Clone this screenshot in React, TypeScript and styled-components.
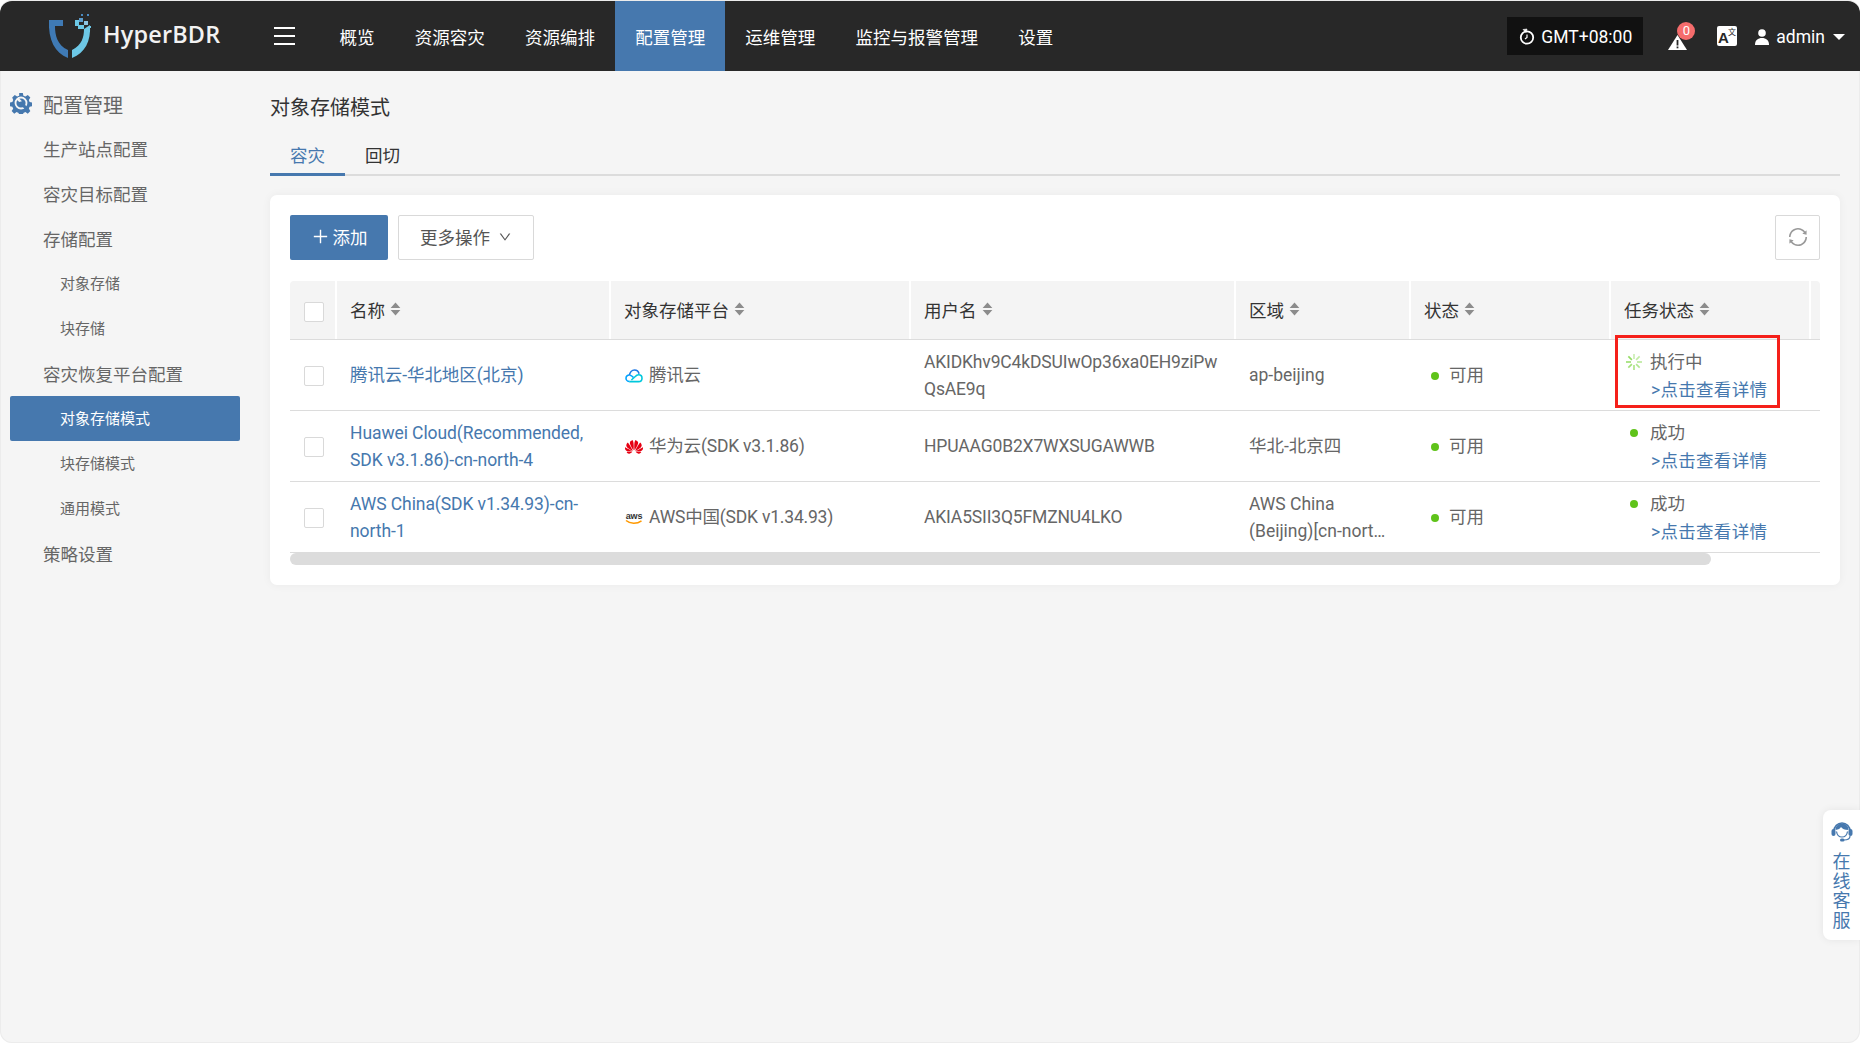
import React from "react";
import styled, { createGlobalStyle } from "styled-components";
import { AiOutlineDown, AiOutlinePlus, AiOutlineSync } from "react-icons/ai";
import { SiHuawei } from "react-icons/si";

const COLUMNS = "45px 274px 300px 325px 175px 200px 200px 11px";
const BLUE = "#4678ae";

const GlobalStyle = createGlobalStyle`
  html, body {
    margin: 0;
    padding: 0;
    background: #fff;
  }
  body {
    font-family: Roboto, "Noto Sans CJK SC", sans-serif;
    font-size: 17.5px;
    color: #666;
    overflow: hidden;
  }
  * {
    box-sizing: border-box;
  }
`;

const Page = styled.div`
  width: 1860px;
  height: 1043px;
  padding-top: 1px;
  background: #f5f5f5;
  border-radius: 12px;
  overflow: hidden;
  box-shadow: inset 0 0 0 1px #ececec;
  display: flex;
  flex-direction: column;
  position: relative;
`;

const TopBar = styled.header`
  height: 70px;
  flex: none;
  background: #282828;
  border-radius: 12px 12px 0 0;
  display: flex;
  align-items: stretch;
  color: #fff;
`;

const Brand = styled.div`
  width: 274px;
  padding-left: 48px;
  display: flex;
  align-items: center;
  gap: 11px;
`;

const BrandName = styled.span`
  font-family: "Open Sans", sans-serif;
  font-size: 23.4px;
  font-weight: 600;
  letter-spacing: 0.2px;
  color: #f2f2f2;
  margin-top: -5px;
`;

const Burger = styled.button`
  width: 45.5px;
  padding: 0 25px 0 0;
  background: none;
  border: 0;
  display: flex;
  flex-direction: column;
  justify-content: center;
  gap: 6px;
  span {
    display: block;
    height: 2px;
    background: #fff;
  }
`;

const NavItem = styled.a<{ $active?: boolean }>`
  padding: 0 20.1px;
  display: flex;
  align-items: center;
  color: #fff;
  background: ${(p) => (p.$active ? BLUE : "transparent")};
  white-space: nowrap;
`;

const TopRight = styled.div`
  margin-left: auto;
  padding-right: 15px;
  display: flex;
  align-items: center;
`;

const TimeZone = styled.div`
  width: 136px;
  height: 38px;
  margin-top: -1px;
  padding: 2px 0 0 12px;
  background: #111;
  display: flex;
  align-items: center;
  gap: 6px;
  font-size: 17.5px;
`;

const AlertIcon = styled.div`
  position: relative;
  width: 20px;
  height: 16px;
  margin: 12px 0 0 25px;
`;

const Badge = styled.span`
  position: absolute;
  left: 9px;
  top: -12px;
  width: 18px;
  height: 18px;
  border-radius: 50%;
  background: #f56c6c;
  color: #fff;
  font-size: 13px;
  line-height: 18px;
  text-align: center;
`;

const TranslateIcon = styled.svg`
  margin: 0 0 0 29px;
`;

const UserName = styled.div`
  margin: 2px 0 0 18px;
  display: flex;
  align-items: center;
  gap: 7px;
`;

const Caret = styled.span`
  width: 0;
  height: 0;
  margin: 0 0 0 1px;
  border-left: 6px solid transparent;
  border-right: 6px solid transparent;
  border-top: 6px solid #fff;
`;

const Body = styled.div`
  flex: 1;
  display: flex;
`;

const Sidebar = styled.aside`
  width: 270px;
  flex: none;
  padding: 11px 30px 0 10px;
`;

const SideHead = styled.div`
  height: 44px;
  display: flex;
  align-items: center;
  gap: 11px;
  font-size: 20px;
  color: #666;
  svg {
    margin-top: -3px;
  }
`;

const SideItem = styled.div<{ $sub?: boolean; $active?: boolean }>`
  height: 45px;
  display: flex;
  align-items: center;
  padding: 0 0 ${(p) => (p.$sub ? "2px" : "0")} ${(p) => (p.$sub ? "50px" : "33px")};
  font-size: ${(p) => (p.$sub ? "15px" : "17.5px")};
  color: ${(p) => (p.$active ? "#fff" : "#666")};
  background: ${(p) => (p.$active ? BLUE : "transparent")};
  border-radius: 2px;
`;

const Main = styled.main`
  flex: 1;
  min-width: 0;
  padding: 19px 20px 0 0;
`;

const Title = styled.h1`
  margin: 0;
  height: 36px;
  font-size: 20px;
  line-height: 36px;
  font-weight: 400;
  color: #333;
`;

const Tabs = styled.div`
  margin-top: 9px;
  height: 41px;
  display: flex;
  border-bottom: 2px solid #dcdcdc;
`;

const Tab = styled.div<{ $active?: boolean }>`
  width: 75px;
  height: 41px;
  text-align: center;
  line-height: 42px;
  color: ${(p) => (p.$active ? BLUE : "#333")};
  border-bottom: 3px solid ${(p) => (p.$active ? BLUE : "transparent")};
`;

const Card = styled.section`
  margin-top: 19px;
  height: 390px;
  padding: 20px 20px 0;
  background: #fff;
  border-radius: 7px;
  box-shadow: 0 0 10px rgba(0, 0, 0, 0.05);
`;

const Toolbar = styled.div`
  display: flex;
  gap: 10px;
  height: 45px;
`;

const PrimaryButton = styled.button`
  width: 98px;
  padding: 0 0 2px;
  border: 0;
  border-radius: 2px;
  background: ${BLUE};
  color: #fff;
  font: inherit;
  display: flex;
  align-items: center;
  justify-content: center;
  gap: 3px;
`;

const GhostButton = styled.button`
  width: 136px;
  padding: 0 0 2px;
  border: 1px solid #d9d9d9;
  border-radius: 2px;
  background: #fff;
  color: #555;
  font: inherit;
  display: flex;
  align-items: center;
  justify-content: center;
  gap: 8px;
`;

const RefreshButton = styled(GhostButton)`
  width: 45px;
  margin-left: auto;
  color: #999;
`;

const Table = styled.div`
  margin-top: 21px;
`;

const HeadRow = styled.div`
  height: 59px;
  display: grid;
  grid-template-columns: ${COLUMNS};
  background: #f4f4f4;
  border-radius: 4px 4px 0 0;
  border-bottom: 1px solid #dcdcdc;
  color: #333;
`;

const HeadCell = styled.div`
  display: flex;
  align-items: center;
  gap: 5px;
  padding: 0 0 2px 13px;
  border-left: 2px solid #fff;
`;

const CheckCell = styled.div`
  display: flex;
  align-items: center;
  justify-content: center;
  padding-left: 3px;
`;

const HeadCheckCell = styled(CheckCell)`
  padding-top: 3px;
`;

const CheckBox = styled.span`
  width: 20px;
  height: 20px;
  background: #fff;
  border: 1px solid #d9d9d9;
  border-radius: 2px;
`;

const Row = styled.div`
  height: 71px;
  padding-top: 2px;
  display: grid;
  grid-template-columns: ${COLUMNS};
  border-bottom: 1px solid #dcdcdc;
  position: relative;
`;

const Cell = styled.div`
  display: flex;
  align-items: center;
  padding: 0 15px;
  line-height: 27.5px;
  min-width: 0;
`;

const LinkText = styled.a`
  color: ${BLUE};
  letter-spacing: -0.08px;
`;

const Platform = styled(Cell)`
  gap: 6px;
  padding-left: 16px;
  white-space: nowrap;
  letter-spacing: -0.2px;
`;

const Username = styled.div`
  word-break: break-all;
  letter-spacing: -0.15px;
`;

const Clamp = styled.div`
  display: -webkit-box;
  -webkit-box-orient: vertical;
  -webkit-line-clamp: 2;
  overflow: hidden;
`;

const Dot = styled.span`
  flex: none;
  width: 8px;
  height: 8px;
  border-radius: 50%;
  background: #5fc31a;
`;

const StatusCell = styled(Cell)`
  gap: 10px;
  padding-left: 22px;
`;

const TaskCell = styled.div`
  padding: 6px 0 0 16px;
  line-height: 28px;
`;

const TaskLine = styled.div`
  display: flex;
  align-items: center;
`;

const TaskMark = styled.span`
  width: 25px;
  display: flex;
  align-items: center;
  justify-content: center;
  padding-right: 7px;
`;

const DetailLink = styled.a`
  display: block;
  padding-left: 26px;
  color: ${BLUE};
  letter-spacing: 0.3px;
`;

const Highlight = styled.div`
  position: absolute;
  left: 1325px;
  top: -5px;
  width: 165px;
  height: 73px;
  border: 3px solid #f5201a;
  pointer-events: none;
`;

const ScrollBar = styled.div`
  width: 1421px;
  height: 12px;
  background: #dcdcdc;
  border-radius: 6px;
`;

const Service = styled.div`
  position: absolute;
  right: 0;
  top: 810px;
  width: 37px;
  height: 130px;
  padding: 9px 0 0 0;
  background: #fff;
  border-radius: 8px 0 0 8px;
  box-shadow: 0 0 8px rgba(0, 0, 0, 0.07);
  color: ${BLUE};
  font-size: 18px;
  line-height: 19.5px;
  text-align: center;
  svg {
    display: block;
    margin: 0 auto 9px;
  }
`;

const Sort = () => (
  <svg width="11" height="14" viewBox="0 0 10 13">
    <path d="M5 0.5 9.5 5.5H0.5Z M5 12.5 0.5 7.5H9.5Z" fill="#8c8c8c" />
  </svg>
);

const Logo = () => (
  <svg width="44" height="44" viewBox="0 0 44 44">
    <path d="M1 6H15V12H7C7 21 9 31 20 36V44C7 39 0 26 1 6Z" fill="#3f7ab5" />
    <path d="M24 44V36C34 31 36 23 36 15L42 11C43 27 37 39 24 44Z" fill="#6dc8e6" />
    <path d="M27 6H31V11H36V15H30V12H27Z" fill="#6dc8e6" />
    <rect x="31" y="4" width="4" height="4" fill="#5b9ccc" />
    <rect x="36" y="7" width="4" height="4" fill="#8cc4e2" />
    <rect x="33" y="0" width="2" height="2" fill="#4b8bc0" />
    <rect x="39" y="0" width="2" height="2" fill="#4b8bc0" />
    <rect x="41" y="12" width="2" height="2" fill="#6dc8e6" />
  </svg>
);

const ClockIcon = () => (
  <svg width="16" height="17" viewBox="0 0 16 17" fill="none" stroke="#fff">
    <circle cx="8" cy="9.5" r="6.2" strokeWidth="1.8" />
    <path d="M8 6.5V9.5L6 11" strokeWidth="1.2" />
    <path d="M4 1.5 8 1 7 4.5Z" fill="#fff" strokeWidth="0.6" />
  </svg>
);

const TriangleIcon = () => (
  <svg width="19" height="15" viewBox="0 0 19 15">
    <path d="M9.5 0 19 15H0Z" fill="#fff" />
    <rect x="8.6" y="5" width="1.8" height="5.5" fill="#282828" />
    <rect x="8.6" y="11.5" width="1.8" height="1.8" fill="#282828" />
  </svg>
);

const GearIcon = () => (
  <svg width="22" height="22" viewBox="0 0 24 24">
    <path
      fill={BLUE}
      d="M10 1h4l.6 3 2.2.9 2.6-1.7 2.8 2.8-1.7 2.6.9 2.2 3 .6v4l-3 .6-.9 2.2 1.7 2.6-2.8 2.8-2.6-1.7-2.2.9-.6 3h-4l-.6-3-2.2-.9-2.6 1.7-2.8-2.8 1.7-2.6-.9-2.2-3-.6v-4l3-.6.9-2.2L2.4 6l2.8-2.8 2.6 1.7 2.2-.9Z"
    />
    <circle cx="12" cy="12" r="6" fill="none" stroke="#f5f5f5" strokeWidth="2" />
    <path d="M11 11l9 9" stroke={BLUE} strokeWidth="3.5" />
    <path d="M9 6l4 4-3 1-3-3Z" fill="#f5f5f5" />
  </svg>
);

const TencentIcon = () => (
  <svg width="18" height="14" viewBox="0 0 18 14" fill="none">
    <path d="M4.5 12.5C2.5 12.5 1 11 1 9.2 1 7.4 2.5 6 4.3 6" stroke="#00a4ff" strokeWidth="1.6" />
    <path d="M4.4 6.5C4.8 3.3 7 1 9.5 1c2.3 0 4 1.5 4.6 3.8" stroke="#1e78e6" strokeWidth="1.6" />
    <path
      d="M4.3 12.6h9.2c2 0 3.5-1.5 3.5-3.4 0-1.9-1.5-3.4-3.4-3.4-1.4 0-2.4.7-3.6 2L6.4 11"
      stroke="#00c8dc"
      strokeWidth="1.6"
    />
    <path d="M4.8 6.2c1 0 1.8.5 2.6 1.3l1 1" stroke="#00a4ff" strokeWidth="1.6" />
  </svg>
);

const AwsIcon = () => (
  <svg width="18" height="14" viewBox="0 0 18 14">
    <text x="9" y="7.5" textAnchor="middle" fontFamily="Liberation Sans, sans-serif" fontSize="9" fontWeight="700" fill="#333">
      aws
    </text>
    <path d="M1 9.5C5 13 12 13 16.5 9.8" fill="none" stroke="#f90" strokeWidth="1.5" />
  </svg>
);

const Spinner = () => (
  <svg width="16" height="16" viewBox="0 0 16 16">
    {[0, 45, 90, 135, 180, 225, 270, 315].map((deg, i) => (
      <rect
        key={deg}
        x="7.2"
        y="0"
        width="1.6"
        height="5"
        fill="#93dc62"
        opacity={0.5 + i * 0.07}
        transform={`rotate(${deg} 8 8)`}
      />
    ))}
  </svg>
);

const HeadsetIcon = () => (
  <svg width="22" height="24" viewBox="0 0 22 24">
    <path d="M3 12a8 8 0 0 1 16 0" fill="none" stroke={BLUE} strokeWidth="1.6" />
    <path d="M4.5 11c0-4 3-6.5 6.5-6.5s6.5 2.5 6.5 6.5c-4 0-6-1-7.5-3-.8 1.5-2.5 2.7-5.5 3Z" fill={BLUE} />
    <path d="M5.5 12.5c.5 3.5 2.8 5.5 5.5 5.5s5-2 5.5-5.5" fill="none" stroke={BLUE} strokeWidth="1.2" />
    <rect x="0.5" y="10" width="4" height="7" rx="2" fill={BLUE} />
    <rect x="17.5" y="10" width="4" height="7" rx="2" fill={BLUE} />
    <path d="M19 17c0 3-3 4-6 4" fill="none" stroke={BLUE} strokeWidth="1.2" />
    <rect x="9" y="19.5" width="4.5" height="3" rx="1.5" fill={BLUE} />
  </svg>
);

const HeadLabel = ({ children }: { children: React.ReactNode }) => (
  <HeadCell>
    {children}
    <Sort />
  </HeadCell>
);

const rows = [
  {
    name: "腾讯云-华北地区(北京)",
    icon: <TencentIcon />,
    platform: "腾讯云",
    user: "AKIDKhv9C4kDSUIwOp36xa0EH9ziPwQsAE9q",
    region: "ap-beijing",
    running: true,
  },
  {
    name: "Huawei Cloud(Recommended, SDK v3.1.86)-cn-north-4",
    icon: <SiHuawei size={18} color="#e60012" />,
    platform: "华为云(SDK v3.1.86)",
    user: "HPUAAG0B2X7WXSUGAWWB",
    region: "华北-北京四",
    running: false,
  },
  {
    name: "AWS China(SDK v1.34.93)-cn-north-1",
    icon: <AwsIcon />,
    platform: "AWS中国(SDK v1.34.93)",
    user: "AKIA5SII3Q5FMZNU4LKO",
    region: "AWS China (Beijing)[cn-north-1]",
    running: false,
  },
];

const navItems = ["概览", "资源容灾", "资源编排", "配置管理", "运维管理", "监控与报警管理", "设置"];

export default function App() {
  return (
    <Page>
      <GlobalStyle />
      <TopBar>
        <Brand>
          <Logo />
          <BrandName>HyperBDR</BrandName>
        </Brand>
        <Burger>
          <span />
          <span />
          <span />
        </Burger>
        {navItems.map((item) => (
          <NavItem key={item} $active={item === "配置管理"}>
            {item}
          </NavItem>
        ))}
        <TopRight>
          <TimeZone>
            <ClockIcon />
            GMT+08:00
          </TimeZone>
          <AlertIcon>
            <TriangleIcon />
            <Badge>0</Badge>
          </AlertIcon>
          <TranslateIcon width="20" height="20" viewBox="0 0 20 20">
            <rect width="20" height="20" rx="2" fill="#fff" />
            <text x="1" y="17" fontFamily="Liberation Sans, sans-serif" fontSize="15" fontWeight="700" fill="#282828">
              A
            </text>
            <text x="11" y="9" fontFamily="Noto Sans CJK SC, sans-serif" fontSize="8" fill="#282828">
              文
            </text>
          </TranslateIcon>
          <UserName>
            <svg width="14" height="16" viewBox="0 0 14 16">
              <circle cx="7" cy="4" r="3.8" fill="#fff" />
              <path d="M0 16c0-5 3-7 7-7s7 2 7 7Z" fill="#fff" />
            </svg>
            admin
            <Caret />
          </UserName>
        </TopRight>
      </TopBar>
      <Body>
        <Sidebar>
          <SideHead>
            <GearIcon />
            配置管理
          </SideHead>
          <SideItem>生产站点配置</SideItem>
          <SideItem>容灾目标配置</SideItem>
          <SideItem>存储配置</SideItem>
          <SideItem $sub>对象存储</SideItem>
          <SideItem $sub>块存储</SideItem>
          <SideItem>容灾恢复平台配置</SideItem>
          <SideItem $sub $active>
            对象存储模式
          </SideItem>
          <SideItem $sub>块存储模式</SideItem>
          <SideItem $sub>通用模式</SideItem>
          <SideItem>策略设置</SideItem>
        </Sidebar>
        <Main>
          <Title>对象存储模式</Title>
          <Tabs>
            <Tab $active>容灾</Tab>
            <Tab>回切</Tab>
          </Tabs>
          <Card>
            <Toolbar>
              <PrimaryButton>
                <AiOutlinePlus size={19} />
                添加
              </PrimaryButton>
              <GhostButton>
                更多操作
                <AiOutlineDown size={14} />
              </GhostButton>
              <RefreshButton>
                <AiOutlineSync size={22} />
              </RefreshButton>
            </Toolbar>
            <Table>
              <HeadRow>
                <HeadCheckCell>
                  <CheckBox />
                </HeadCheckCell>
                <HeadLabel>名称</HeadLabel>
                <HeadLabel>对象存储平台</HeadLabel>
                <HeadLabel>用户名</HeadLabel>
                <HeadLabel>区域</HeadLabel>
                <HeadLabel>状态</HeadLabel>
                <HeadLabel>任务状态</HeadLabel>
                <HeadCell />
              </HeadRow>
              {rows.map((row) => (
                <Row key={row.name}>
                  <CheckCell>
                    <CheckBox />
                  </CheckCell>
                  <Cell>
                    <LinkText>{row.name}</LinkText>
                  </Cell>
                  <Platform>
                    {row.icon}
                    {row.platform}
                  </Platform>
                  <Cell>
                    <Username>{row.user}</Username>
                  </Cell>
                  <Cell>
                    <Clamp>{row.region}</Clamp>
                  </Cell>
                  <StatusCell>
                    <Dot />
                    可用
                  </StatusCell>
                  <TaskCell>
                    <TaskLine>
                      <TaskMark>{row.running ? <Spinner /> : <Dot />}</TaskMark>
                      {row.running ? "执行中" : "成功"}
                    </TaskLine>
                    <DetailLink>&gt;点击查看详情</DetailLink>
                  </TaskCell>
                  {row.running && <Highlight />}
                </Row>
              ))}
              <ScrollBar />
            </Table>
          </Card>
        </Main>
      </Body>
      <Service>
        <HeadsetIcon />
        在<br />线<br />客<br />服
      </Service>
    </Page>
  );
}
